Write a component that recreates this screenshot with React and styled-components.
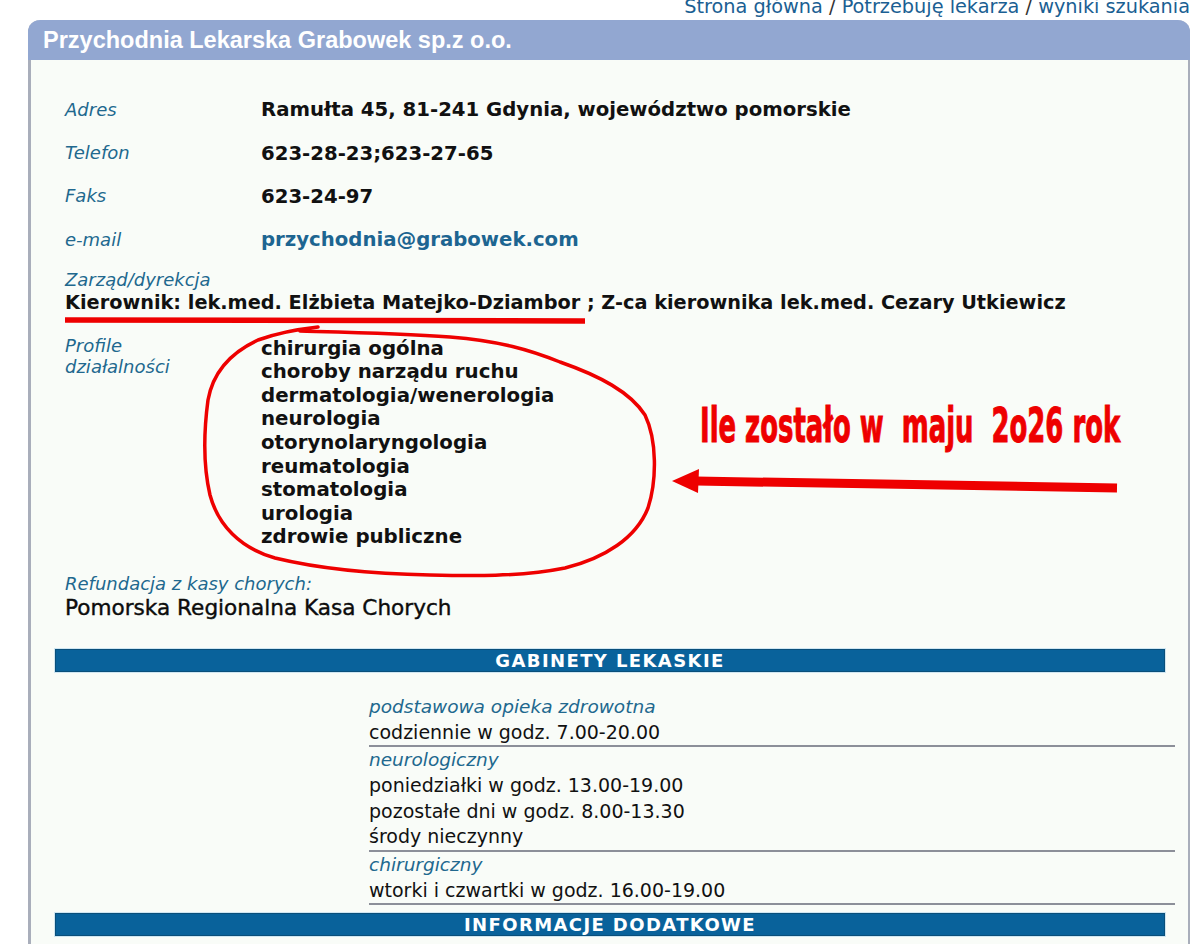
import React from "react";
import styled, { createGlobalStyle } from "styled-components";

const GlobalStyle = createGlobalStyle`
  html, body {
    margin: 0;
    padding: 0;
    background: #ffffff;
    overflow: hidden;
  }
`;

const Page = styled.div`
  width: 1200px;
  height: 944px;
  overflow: hidden;
  position: relative;
  font-family: "DejaVu Sans", Verdana, sans-serif;
`;

const TopNav = styled.div`
  height: 26px;
  margin-top: -6px;
  padding-right: 10px;
  text-align: right;
  font-size: 19.3px;
  line-height: 26px;
  color: #333;
  white-space: nowrap;
`;

const NavLink = styled.a`
  color: #1b5f93;
  text-decoration: none;
`;

const Card = styled.div`
  margin-left: 28px;
  width: 1162px;
  box-sizing: border-box;
  border-radius: 12px 12px 0 0;
  border-left: 3px solid #a9aebb;
  border-right: 2px solid #a9aebb;
  background: #f9fcf8;
  height: 940px;
`;

const CardHeader = styled.div`
  height: 40px;
  margin: 0 -2px 0 -3px;
  padding-left: 15px;
  border-radius: 12px 12px 0 0;
  background: #92a7d1;
  color: #ffffff;
  font-family: "Liberation Sans", Arial, sans-serif;
  font-weight: bold;
  font-size: 23.5px;
  line-height: 40px;
`;

const CardBody = styled.div`
  padding: 28px 13px 0 34px;
`;

const InfoGrid = styled.div`
  display: grid;
  grid-template-columns: 196px 1fr;
  grid-auto-rows: 43.4px;
  align-items: center;
`;

const Label = styled.div`
  font-style: italic;
  font-size: 18px;
  line-height: ${(p) => p.$lh || "20px"};
  color: #21688e;
`;

const Value = styled.div`
  font-weight: bold;
  font-size: 19.7px;
  color: ${(p) => (p.$link ? "#1d6591" : "#111")};
`;

const Section = styled.div`
  margin-top: ${(p) => p.$gap || 0}px;
`;

const Management = styled.div`
  font-weight: bold;
  font-size: 19.3px;
  line-height: 25px;
  color: #111;
  white-space: nowrap;
`;

const ProfileRow = styled.div`
  display: grid;
  grid-template-columns: 196px 1fr;
  margin-top: 20px;
`;

const ProfileList = styled.ul`
  margin: 2px 0 0;
  padding: 0;
  list-style: none;
  font-weight: bold;
  font-size: 19.8px;
  line-height: 23.6px;
  color: #111;
`;

const Fund = styled.div`
  font-size: 21.6px;
  line-height: 27px;
  color: #0c0c0c;
  -webkit-text-stroke: 0.4px #0c0c0c;
`;

const SectionBar = styled.div`
  margin: ${(p) => p.$top}px 10px 0 -10px;
  height: ${(p) => p.$h || 22}px;
  box-sizing: border-box;
  background: #09629b;
  border: 1px solid #0a4f7a;
  box-shadow: 0 0 0 1px #cfe6f2;
  color: #ffffff;
  text-align: center;
  font-weight: bold;
  font-size: 18px;
  letter-spacing: 1.4px;
  line-height: ${(p) => (p.$h || 22) - 2}px;
`;

const Schedule = styled.div`
  margin: 22px 0 0 304px;
`;

const Office = styled.div`
  border-bottom: 2px solid #8c8f99;
`;

const OfficeName = styled.div`
  font-style: italic;
  font-size: 18.5px;
  line-height: 26px;
  color: #21688e;
`;

const Hours = styled.div`
  font-size: 19px;
  line-height: 25.5px;
  color: #111;
`;

/* red marker scribbles drawn on top of the page */
const Marks = styled.svg`
  position: absolute;
  left: 0;
  top: 0;
  pointer-events: none;
`;

const Note = styled.div`
  position: absolute;
  left: 700px;
  top: 395px;
  font-family: "DejaVu Sans Condensed", "DejaVu Sans", sans-serif;
  font-stretch: condensed;
  font-weight: bold;
  font-size: 48px;
  line-height: 60px;
  color: #ee0000;
  white-space: pre;
  -webkit-text-stroke: 1px #ee0000;
  transform: scaleX(0.6);
  transform-origin: left top;
`;

const info = [
  ["Adres", "Ramułta 45, 81-241 Gdynia, województwo pomorskie"],
  ["Telefon", "623-28-23;623-27-65"],
  ["Faks", "623-24-97"],
  ["e-mail", "przychodnia@grabowek.com", true],
];

const profiles = [
  "chirurgia ogólna",
  "choroby narządu ruchu",
  "dermatologia/wenerologia",
  "neurologia",
  "otorynolaryngologia",
  "reumatologia",
  "stomatologia",
  "urologia",
  "zdrowie publiczne",
];

const offices = [
  { name: "podstawowa opieka zdrowotna", hours: ["codziennie w godz. 7.00-20.00"] },
  {
    name: "neurologiczny",
    hours: [
      "poniedziałki w godz. 13.00-19.00",
      "pozostałe dni w godz. 8.00-13.30",
      "środy nieczynny",
    ],
  },
  { name: "chirurgiczny", hours: ["wtorki i czwartki w godz. 16.00-19.00"] },
];

const App = () => {
  return (
    <>
      <GlobalStyle />
      <Page>
        <TopNav>
          <NavLink>Strona główna</NavLink> / <NavLink>Potrzebuję lekarza</NavLink> /{" "}
          <NavLink>wyniki szukania</NavLink>
        </TopNav>
        <Card>
          <CardHeader>Przychodnia Lekarska Grabowek sp.z o.o.</CardHeader>
          <CardBody>
            <InfoGrid>
              {info.map(([label, value, link]) => (
                <React.Fragment key={label}>
                  <Label>{label}</Label>
                  <Value $link={link}>{value}</Value>
                </React.Fragment>
              ))}
            </InfoGrid>
            <Section $gap={8}>
              <Label>Zarząd/dyrekcja</Label>
              <Management>
                Kierownik: lek.med. Elżbieta Matejko-Dziambor ; Z-ca kierownika
                lek.med. Cezary Utkiewicz
              </Management>
            </Section>
            <ProfileRow>
              <Label $lh="21px">
                Profile
                <br />
                działalności
              </Label>
              <ProfileList>
                {profiles.map((p) => (
                  <li key={p}>{p}</li>
                ))}
              </ProfileList>
            </ProfileRow>
            <Section $gap={25}>
              <Label>Refundacja z kasy chorych:</Label>
              <Fund>Pomorska Regionalna Kasa Chorych</Fund>
            </Section>
            <SectionBar $top={28} $h={23}>GABINETY LEKASKIE</SectionBar>
            <Schedule>
              {offices.map((o) => (
                <Office key={o.name}>
                  <OfficeName>{o.name}</OfficeName>
                  {o.hours.map((h) => (
                    <Hours key={h}>{h}</Hours>
                  ))}
                </Office>
              ))}
            </Schedule>
            <SectionBar $top={8} $h={23}>INFORMACJE DODATKOWE</SectionBar>
          </CardBody>
        </Card>

        <Marks width="1200" height="944" viewBox="0 0 1200 944">
          <path d="M65 320 L585 321" stroke="#ee0000" strokeWidth="5.5" fill="none" />
          <path
            d="M300 331 C340 332 400 333 450 337 C500 341 530 350 560 362 C600 376 630 392 645 415
               C657 440 657 480 648 508 C636 538 605 558 565 568 C520 577 470 576 430 575
               C380 574 320 569 275 558 C240 548 218 525 210 495 C203 465 204 430 208 400
               C213 372 232 352 258 340 C280 332 300 329 318 327"
            stroke="#ee0000"
            strokeWidth="3.5"
            fill="none"
            strokeLinecap="round"
          />
          <path d="M1117 488 L696 481" stroke="#ee0000" strokeWidth="9" fill="none" />
          <path d="M672 481 L699 469 L698 493 Z" fill="#ee0000" />
        </Marks>
        <Note>{"Ile zostało w  maju  2o26 rok"}</Note>
      </Page>
    </>
  );
};

export default App;
